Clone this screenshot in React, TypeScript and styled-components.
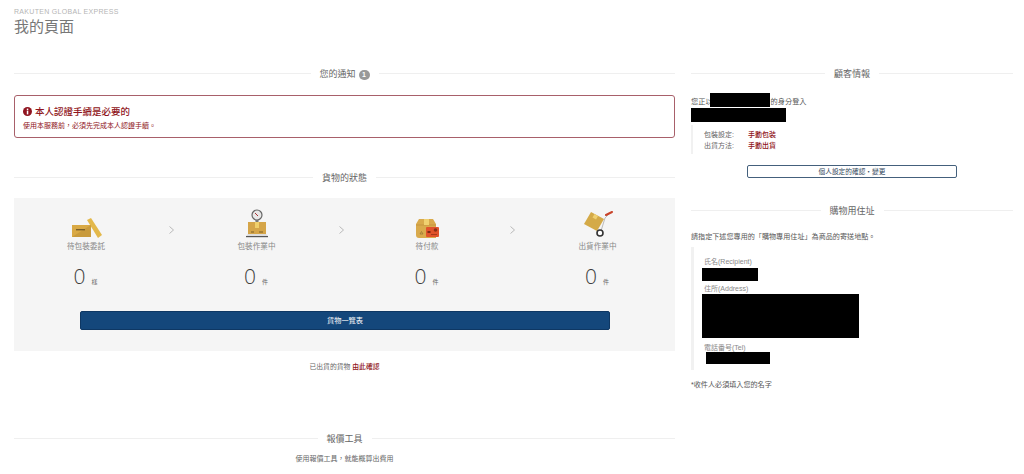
import React from "react";
import styled, { createGlobalStyle } from "styled-components";

const Global = createGlobalStyle`
  html, body { margin: 0; padding: 0; height: 474px; overflow: hidden; background: #fff; }
  body { font-family: "Liberation Sans", "Noto Sans CJK TC", sans-serif; color: #555; font-size: 7px; line-height: 12px; }
`;

const Page = styled.div`padding: 7px 11px 0 14px; width: 999px; box-sizing: border-box;`;
const Eyebrow = styled.div`font-size: 7px; line-height: 10px; letter-spacing: 0.3px; color: #b5b5b5;`;
const Title = styled.h1`margin: 0; font-size: 15px; line-height: 20px; font-weight: 400; color: #777;`;
const Columns = styled.div`display: grid; grid-template-columns: 661px 322px; column-gap: 16px; margin-top: 29px;`;
const Column = styled.div`display: flex; flex-direction: column;`;

const Heading = styled.h2<{ $top?: number }>`
  margin: ${p => p.$top ?? 0}px 0 0;
  display: flex; align-items: center; gap: 9px;
  height: 14px; font-size: 9px; font-weight: 400; color: #666; white-space: nowrap;
  &::before, &::after { content: ""; flex: 1; height: 1px; background: #efefef; }
  & > span { padding-top: 1px; }
`;
const Badge = styled.span`
  display: inline-flex; align-items: center; justify-content: center;
  width: 11px; height: 10px; margin-left: 3px; border-radius: 5px;
  background: #999; color: #fff; font-size: 7px; line-height: 10px; font-weight: 700; vertical-align: 0;
`;

const Alert = styled.div`
  margin-top: 15px; height: 43px; box-sizing: border-box; padding: 9px 8px 0;
  border: 1px solid #a8606a; border-radius: 3px; color: #8f1420;
`;
const AlertTitle = styled.div`display: flex; align-items: center; gap: 3px; font-size: 9.5px; line-height: 13px; font-weight: 500;`;
const AlertText = styled.div`margin-top: 2px; font-size: 7px; line-height: 12px;`;

const Panel = styled.div`margin-top: 14px; height: 153px; box-sizing: border-box; padding: 8px 0 0 15px; background: #f5f5f5;`;
const Steps = styled.div`display: grid; grid-template-columns: 114px 56.5px 114px 56.5px 114px 56.5px 114px;`;
const Step = styled.div`display: flex; flex-direction: column; align-items: center;`;
const IconBox = styled.div`height: 32px; display: flex; align-items: flex-end;`;
const StepLabel = styled.div`margin-top: 3px; font-size: 7.6px; line-height: 12px; color: #888;`;
const Count = styled.div`display: flex; align-items: baseline; gap: 6px; margin-top: 11px; margin-left: -1px; line-height: 24px; font-family: "Open Sans", "Liberation Sans", sans-serif; font-weight: 300; font-size: 21px; color: #3f3f3f;`;
const Unit = styled.span`font-family: "Liberation Sans", "Noto Sans CJK TC", sans-serif; font-weight: 400; font-size: 6px; line-height: 8px; color: #666;`;
const Arrow = styled.div`display: flex; justify-content: center; align-items: flex-start; padding-top: 20px;`;
const PrimaryButton = styled.button`
  display: block; margin: 23px 0 0 51px; width: 530px; height: 19px; padding: 0;
  border: 1px solid #0e3763; border-radius: 2px; background: #14477b; color: #fff;
  font: 7.2px/16px "Liberation Sans", "Noto Sans CJK TC", sans-serif;
`;
const CenterLine = styled.p<{ $top: number }>`margin: ${p => p.$top}px 0 0; text-align: center; font-size: 7px; line-height: 12px; color: #666;`;
const LinkLine = styled(CenterLine)`font-size: 6.8px;`;
const RedLink = styled.a`color: #8f1420; font-weight: 500; margin-left: 2px;`;

const Redact = styled.span<{ $w: number; $h: number; $top?: number; $left?: number }>`
  display: block; flex: none; background: #000;
  width: ${p => p.$w}px; height: ${p => p.$h}px;
  margin-top: ${p => p.$top ?? 0}px; margin-left: ${p => p.$left ?? 0}px;
`;
const LoginRow = styled.div`margin-top: 13px; display: flex; align-items: flex-start; gap: 1px; height: 15px;`;
const LoginText = styled.span`padding-top: 3px; font-size: 7.2px; line-height: 12px; white-space: nowrap;`;
const Settings = styled.dl`
  margin: 3px 0 0; padding: 4px 0 3px; border-left: 2px solid #f1f1f1;
  display: grid; grid-template-columns: 41px 1fr; column-gap: 14px; grid-auto-rows: 11px;
  font-size: 7px; line-height: 11px;
`;
const SetKey = styled.dt`text-align: right; color: #666;`;
const SetVal = styled.dd`margin: 0; color: #8f1420; font-weight: 500;`;
const OutlineButton = styled.button`
  display: block; margin: 11px 0 0 56px; width: 210px; height: 13px; padding: 0;
  border: 1px solid #44607c; border-radius: 2px; background: #fff; color: #33475c;
  font: 6.7px/11px "Liberation Sans", "Noto Sans CJK TC", sans-serif;
`;
const SideText = styled.p<{ $top: number }>`margin: ${p => p.$top}px 0 0; font-size: 7.1px; line-height: 12px; color: #555; white-space: nowrap;`;
const AddressBlock = styled.div`margin-top: 4px; height: 123px; box-sizing: border-box; padding: 9px 0 0 8px; border-left: 3px solid #f1f1f1;`;
const AddressLabel = styled.div<{ $top?: number }>`margin: ${p => p.$top ?? 0}px 0 0 2px; font-size: 7px; line-height: 11px; color: #888;`;

const BoxOpen = () => (
  <svg width="31" height="20" viewBox="0 0 31 20">
    <path d="M16 2 L20 0 L31 17 L27 20 Z" fill="#e3b84a" />
    <path d="M1 7 H20 V19 H1 Z" fill="#d9a944" />
    <path d="M1 19 L20 7 V19 Z" fill="#c99b3c" />
    <rect x="5" y="11" width="9" height="1.4" fill="#7a5f28" />
  </svg>
);
const BoxScale = () => (
  <svg width="24" height="29" viewBox="0 0 24 29">
    <circle cx="12" cy="6" r="5" fill="#e8e8e8" stroke="#666" strokeWidth="1.2" />
    <path d="M10 4 L13 7" stroke="#a33" strokeWidth="1" />
    <rect x="10.5" y="11" width="3" height="3" fill="#777" />
    <path d="M3 13 H21 V25 H3 Z" fill="#d5a548" />
    <rect x="10" y="13" width="4" height="6" fill="#f0cf6a" />
    <path d="M14 23 h4 M6 23 h3" stroke="#7a5f28" strokeWidth="1" />
    <path d="M1 27 L3 25 H21 L23 27 Z" fill="#ddd" />
    <rect x="1" y="27" width="22" height="1.2" fill="#555" />
  </svg>
);
const BoxPay = () => (
  <svg width="23" height="19" viewBox="0 0 23 19">
    <path d="M3 0 H17 L20 5 V19 H3 Q0 19 0 16 V5 Z" fill="#d9aa4c" />
    <path d="M0 6 H20" stroke="#c2933c" strokeWidth="0.8" />
    <rect x="8" y="0" width="5" height="6" fill="#f0d070" />
    <path d="M4 15 L5.5 12.5 L7 15 Z" fill="none" stroke="#8c6d2f" strokeWidth="0.6" />
    <rect x="10" y="8" width="13" height="10" rx="1" fill="#e0522c" />
    <rect x="11.5" y="12" width="3" height="2" fill="#7c2a14" />
    <circle cx="19.5" cy="11" r="1.8" fill="#8c3018" />
    <rect x="15" y="15" width="6" height="1" fill="#a8391c" />
  </svg>
);
const BoxCart = () => (
  <svg width="30" height="27" viewBox="0 0 30 27">
    <path d="M8 1 L21 8 L14 20 L1 13 Z" fill="#d4aa48" />
    <path d="M11.5 3 L15 5 L13 8.5 L9.5 6.5 Z" fill="#f0d070" />
    <path d="M22 7 L18 20 M26 3 L22 7 M15 20 L18 23" stroke="#bbb" strokeWidth="1" fill="none" />
    <path d="M23 4 L29 1" stroke="#c8432a" strokeWidth="2" strokeLinecap="round" />
    <circle cx="17" cy="22" r="3" fill="#fff" stroke="#333" strokeWidth="1.6" />
  </svg>
);
const Chevron = () => (
  <svg width="5" height="8" viewBox="0 0 5 8"><path d="M0.5 0.5 L4.5 4 L0.5 7.5" fill="none" stroke="#aaa" strokeWidth="0.8" /></svg>
);
const Info = () => (
  <svg width="9" height="9" viewBox="0 0 9 9">
    <circle cx="4.5" cy="4.5" r="4.5" fill="#8f1420" />
    <rect x="3.8" y="1.6" width="1.5" height="1.4" fill="#fff" />
    <rect x="3.8" y="3.6" width="1.5" height="3.8" fill="#fff" />
  </svg>
);

const steps = [
  { icon: <BoxOpen />, label: "待包裝委託", unit: "樣" },
  { icon: <BoxScale />, label: "包裝作業中", unit: "件" },
  { icon: <BoxPay />, label: "待付款", unit: "件" },
  { icon: <BoxCart />, label: "出貨作業中", unit: "件" },
];

const alertText = "使用本服務前\uFF0C必須先完成本人認證手續。";
const quoteText = "使用報價工具\uFF0C就能概算出費用";

export default function App() {
  return (
    <Page>
      <Global />
      <Eyebrow>RAKUTEN GLOBAL EXPRESS</Eyebrow>
      <Title>我的頁面</Title>
      <Columns>
        <Column>
          <Heading><span>您的通知<Badge>1</Badge></span></Heading>
          <Alert>
            <AlertTitle><Info />本人認證手續是必要的</AlertTitle>
            <AlertText>{alertText}</AlertText>
          </Alert>
          <Heading $top={32}><span>貨物的狀態</span></Heading>
          <Panel>
            <Steps>
              {steps.map((s, i) => (
                <React.Fragment key={s.label}>
                  <Step>
                    <IconBox>{s.icon}</IconBox>
                    <StepLabel>{s.label}</StepLabel>
                    <Count>0<Unit>{s.unit}</Unit></Count>
                  </Step>
                  {i < steps.length - 1 && <Arrow><Chevron /></Arrow>}
                </React.Fragment>
              ))}
            </Steps>
            <PrimaryButton>貨物一覽表</PrimaryButton>
          </Panel>
          <LinkLine $top={10}>已出貨的貨物<RedLink>由此確認</RedLink></LinkLine>
          <Heading $top={58}><span>報價工具</span></Heading>
          <CenterLine $top={8}>{quoteText}</CenterLine>
        </Column>
        <Column>
          <Heading><span>顧客情報</span></Heading>
          <LoginRow>
            <LoginText>您正以</LoginText>
            <Redact $w={60} $h={14} $left={-4} />
            <LoginText>的身分登入</LoginText>
          </LoginRow>
          <Redact $w={95} $h={14} />
          <Settings>
            <SetKey>包裝設定:</SetKey><SetVal>手動包裝</SetVal>
            <SetKey>出貨方法:</SetKey><SetVal>手動出貨</SetVal>
          </Settings>
          <OutlineButton>個人設定的確認・變更</OutlineButton>
          <Heading $top={25}><span>購物用住址</span></Heading>
          <SideText $top={14}>請指定下述您專用的「購物專用住址」為商品的寄送地點。</SideText>
          <AddressBlock>
            <AddressLabel>氏名(Recipient)</AddressLabel>
            <Redact $w={56} $h={13} $top={1} />
            <AddressLabel $top={2}>住所(Address)</AddressLabel>
            <Redact $w={157} $h={44} />
            <AddressLabel $top={4}>電話番号(Tel)</AddressLabel>
            <Redact $w={64} $h={12} $top={-1} $left={4} />
          </AddressBlock>
          <SideText $top={9}>*收件人必須填入您的名字</SideText>
        </Column>
      </Columns>
    </Page>
  );
}
